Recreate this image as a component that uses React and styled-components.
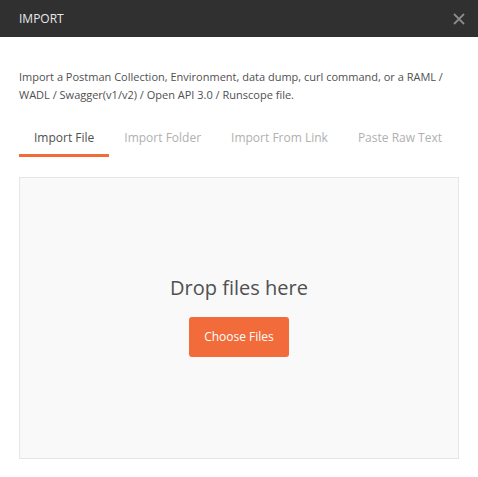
import React, { useState } from "react";
import styled, { createGlobalStyle } from "styled-components";

const GlobalStyle = createGlobalStyle`
    html, body {
        margin: 0;
        padding: 0;
        background: #ffffff;
        font-family: "Open Sans", "Noto Sans", sans-serif;
    }
`;

const Modal = styled.div`
    width: 478px;
    height: 477px;
    display: flex;
    flex-direction: column;
    background: #ffffff;
`;

const Header = styled.div`
    height: 37px;
    flex-shrink: 0;
    background-color: #303030;
    display: flex;
    align-items: center;
    justify-content: space-between;
    padding: 0 13px 0 19px;
`;

const Title = styled.span`
    color: #e8e8e8;
    font-size: 12px;
`;

const CloseButton = styled.button`
    width: 12px;
    height: 12px;
    padding: 0;
    border: none;
    background: transparent;
    display: flex;
    cursor: pointer;
`;

const Body = styled.div`
    padding: 31px 19px 0 19px;
`;

const Description = styled.p`
    margin: 0;
    font-size: 11px;
    line-height: 18px;
    color: #505050;
`;

const Tabs = styled.div`
    display: flex;
    margin-top: 25px;
`;

const Tab = styled.div`
    padding: 0 15px 7px 15px;
    font-size: 12px;
    line-height: 18px;
    white-space: nowrap;
    color: ${props => (props.active ? "#505050" : "#b0b0b0")};
    border-bottom: 3px solid ${props => (props.active ? "#f26b3a" : "transparent")};
    cursor: pointer;
`;

const DropZone = styled.div`
    margin-top: 20px;
    height: 282px;
    box-sizing: border-box;
    border: 1px solid #e6e6e6;
    background-color: #f9f9f9;
    display: flex;
    flex-direction: column;
    align-items: center;
    justify-content: center;
    padding-bottom: 6px;
`;

const DropText = styled.div`
    font-size: 20px;
    line-height: 28px;
    color: #505050;
`;

const ChooseButton = styled.button`
    margin-top: 15px;
    width: 100px;
    height: 40px;
    border: none;
    border-radius: 3px;
    background-color: #f26b3a;
    color: #ffffff;
    font-family: "Open Sans", "Noto Sans", sans-serif;
    font-size: 12px;
    cursor: pointer;
`;

const tabs = ["Import File", "Import Folder", "Import From Link", "Paste Raw Text"];

const App = () => {
    const [activeTab, setActiveTab] = useState(0);

    return (
        <Modal>
            <GlobalStyle />
            <Header>
                <Title>IMPORT</Title>
                <CloseButton>
                    <svg width="12" height="12" viewBox="0 0 12 12">
                        <path d="M1 1 L11 11 M11 1 L1 11" stroke="#8a8a8a" strokeWidth="1.8" />
                    </svg>
                </CloseButton>
            </Header>
            <Body>
                <Description>
                    Import a Postman Collection, Environment, data dump, curl command, or a RAML /
                    WADL / Swagger(v1/v2) / Open API 3.0 / Runscope file.
                </Description>
                <Tabs>
                    {tabs.map((name, i) => (
                        <Tab key={name} active={i === activeTab} onClick={() => setActiveTab(i)}>
                            {name}
                        </Tab>
                    ))}
                </Tabs>
                <DropZone>
                    <DropText>Drop files here</DropText>
                    <ChooseButton>Choose Files</ChooseButton>
                </DropZone>
            </Body>
        </Modal>
    );
};

export default App;
